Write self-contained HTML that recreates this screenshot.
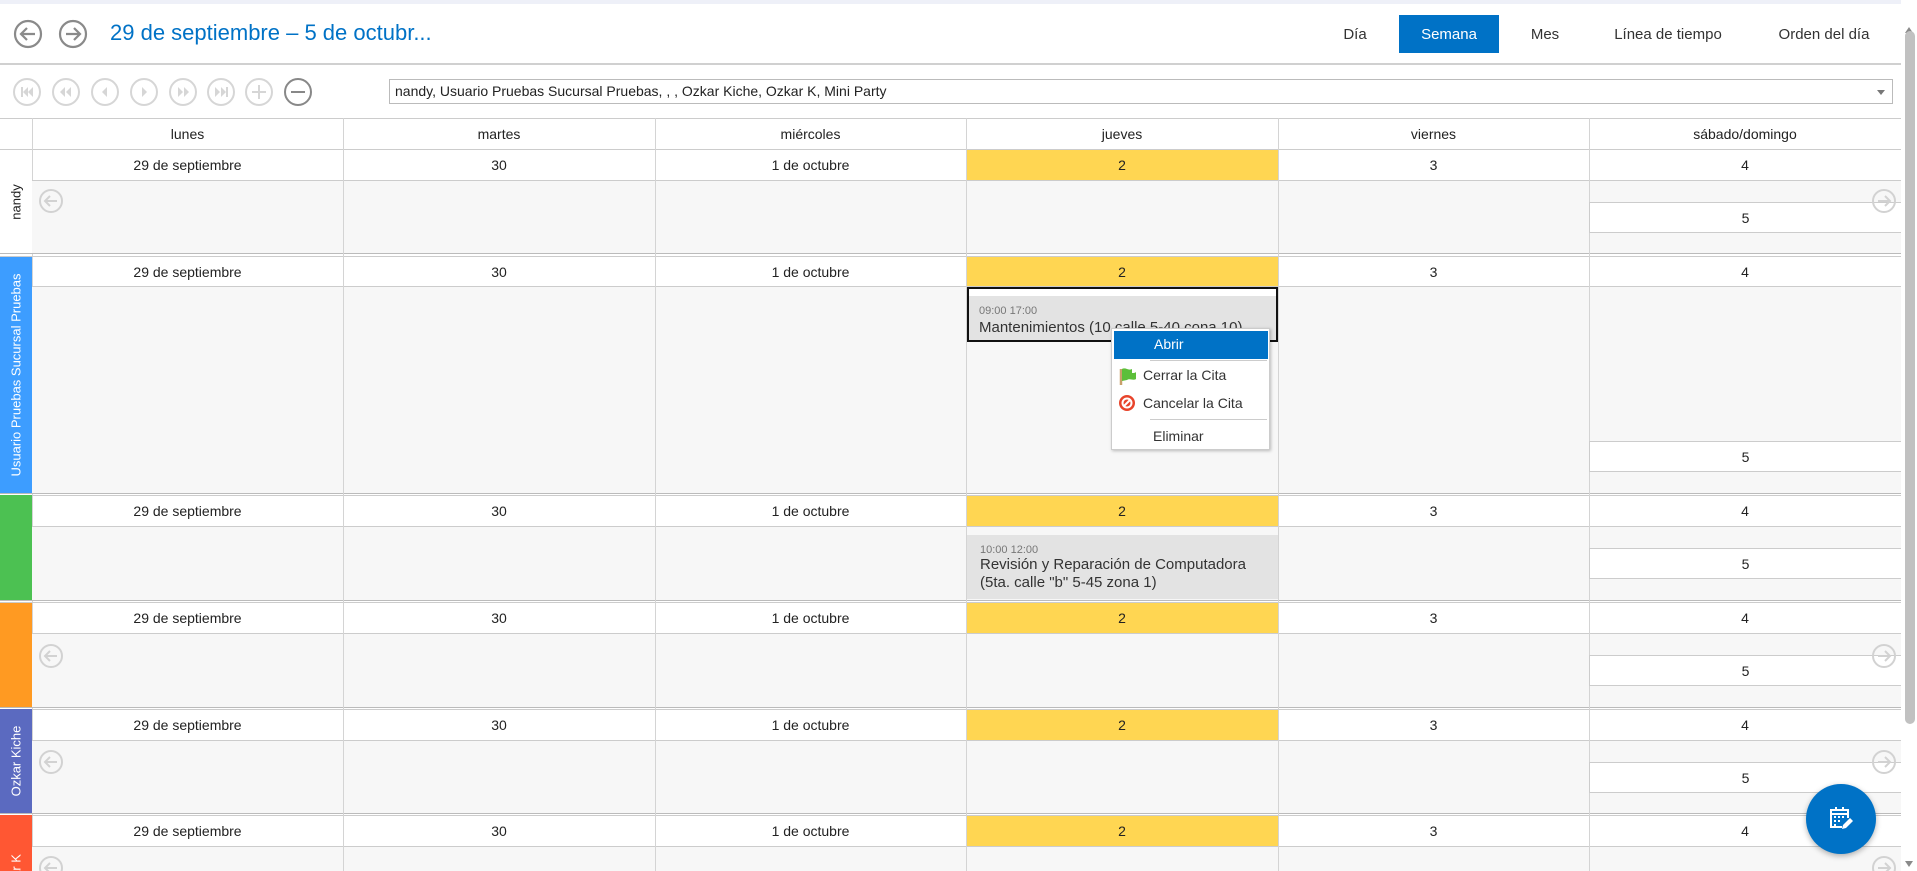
<!DOCTYPE html>
<html><head><meta charset="utf-8"><style>
*{box-sizing:border-box;margin:0;padding:0}
body{width:1917px;height:871px;overflow:hidden;background:#fff;font-family:"Liberation Sans",sans-serif;color:#222;position:relative}
.a{position:absolute}
.c{display:flex;align-items:center;justify-content:center;font-size:14px}
.hl{position:absolute;left:0;width:1901px;height:1px;background:#ccc}
.vl{position:absolute;width:1px;background:#d4d4d4}
.lbl{position:absolute;left:0;width:32px;overflow:hidden;color:#fff;font-size:13px}
.lbl span{position:absolute;left:50%;top:50%;transform:translate(-50%,-50%) rotate(-90deg);white-space:nowrap}
.box5{position:absolute;left:1589px;width:312px;height:31px;background:#fff;border:1px solid #ccc;border-right:none}
.tab{position:absolute;top:15px;height:38px;font-size:15px;display:flex;align-items:center;justify-content:center;color:#333}
</style></head><body>
<div class="a" style="left:0;top:0;width:1917px;height:4px;background:#eef0f8"></div>
<svg class="a" style="left:12px;top:19px" width="80" height="32" viewBox="0 0 80 32" fill="none" stroke="#8a8a8a" stroke-width="2.2">
<circle cx="16" cy="15" r="13"/><path d="M23 15H9M15 9l-6 6 6 6"/>
<circle cx="61" cy="15" r="13"/><path d="M54 15h14M62 9l6 6-6 6"/></svg>
<div class="a" style="left:110px;top:20px;font-size:22px;color:#0072c6">29 de septiembre – 5 de octubr...</div>
<div class="tab" style="left:1325px;width:60px">Día</div>
<div class="tab" style="left:1399px;width:100px;background:#0072c6;color:#fff">Semana</div>
<div class="tab" style="left:1520px;width:50px">Mes</div>
<div class="tab" style="left:1603px;width:130px">Línea de tiempo</div>
<div class="tab" style="left:1764px;width:120px">Orden del día</div>
<div class="a" style="left:0;top:63px;width:1901px;height:2px;background:#d0d0d0"></div>
<svg class="a" style="left:10px;top:77px" width="305" height="32" fill="none" stroke-width="2">
<g stroke="#d6d6d6"><circle cx="17" cy="15" r="13"/><circle cx="56" cy="15" r="13"/><circle cx="95" cy="15" r="13"/><circle cx="134" cy="15" r="13"/><circle cx="173" cy="15" r="13"/><circle cx="211" cy="15" r="13"/><circle cx="249" cy="15" r="13"/>
<path d="M249 8v14M242 15h14"/></g>
<g fill="#d6d6d6" stroke="none"><rect x="11" y="10" width="2" height="10"/><path d="M18 10l-5 5 5 5zM23 10l-5 5 5 5z"/>
<path d="M55 10l-5 5 5 5zM61 10l-5 5 5 5z"/><path d="M97 10l-5 5 5 5z"/><path d="M132 10l5 5-5 5z"/>
<path d="M168 10l5 5-5 5zM174 10l5 5-5 5z"/><path d="M205 10l5 5-5 5zM211 10l5 5-5 5z"/><rect x="216" y="10" width="2" height="10"/></g>
<g stroke="#888"><circle cx="288" cy="15" r="13"/><path d="M281 15h14"/></g></svg>
<div class="a" style="left:389px;top:79px;width:1504px;height:25px;border:1px solid #bbb;font-size:14px;padding:3px 5px;color:#222">nandy, Usuario Pruebas Sucursal Pruebas, , , Ozkar Kiche, Ozkar K, Mini Party</div>
<div class="a" style="left:1877px;top:90px;border:4px solid transparent;border-top:5px solid #777;border-bottom:none"></div>
<div class="hl" style="top:118px"></div>
<div class="a c" style="left:32px;top:119px;width:311px;height:30px">lunes</div>
<div class="a c" style="left:343px;top:119px;width:312px;height:30px">martes</div>
<div class="a c" style="left:655px;top:119px;width:311px;height:30px">miércoles</div>
<div class="a c" style="left:966px;top:119px;width:312px;height:30px">jueves</div>
<div class="a c" style="left:1278px;top:119px;width:311px;height:30px">viernes</div>
<div class="a c" style="left:1589px;top:119px;width:312px;height:30px">sábado/domingo</div>
<div class="hl" style="top:149px"></div>
<div class="vl" style="left:32px;top:118px;height:753px"></div>
<div class="a" style="left:32px;top:180px;width:1869px;height:73px;background:#f7f7f7"></div>
<div class="a" style="left:32px;top:286px;width:1869px;height:207px;background:#f7f7f7"></div>
<div class="a" style="left:32px;top:526px;width:1869px;height:74px;background:#f7f7f7"></div>
<div class="a" style="left:32px;top:633px;width:1869px;height:74px;background:#f7f7f7"></div>
<div class="a" style="left:32px;top:740px;width:1869px;height:73px;background:#f7f7f7"></div>
<div class="a" style="left:32px;top:846px;width:1869px;height:25px;background:#f7f7f7"></div>
<div class="a" style="left:966px;top:150px;width:312px;height:30px;background:#ffd652"></div>
<div class="a" style="left:966px;top:257px;width:312px;height:29px;background:#ffd652"></div>
<div class="a" style="left:966px;top:495px;width:312px;height:31px;background:#ffd652"></div>
<div class="a" style="left:966px;top:603px;width:312px;height:30px;background:#ffd652"></div>
<div class="a" style="left:966px;top:709px;width:312px;height:31px;background:#ffd652"></div>
<div class="a" style="left:966px;top:815px;width:312px;height:31px;background:#ffd652"></div>
<div class="hl" style="top:180px"></div>
<div class="hl" style="top:253px;background:#bbb"></div><div class="hl" style="top:256px"></div>
<div class="hl" style="top:286px"></div>
<div class="hl" style="top:493px;background:#bbb"></div><div class="hl" style="top:495px"></div>
<div class="hl" style="top:526px"></div>
<div class="hl" style="top:600px;background:#bbb"></div><div class="hl" style="top:602px"></div>
<div class="hl" style="top:633px"></div>
<div class="hl" style="top:707px;background:#bbb"></div><div class="hl" style="top:709px"></div>
<div class="hl" style="top:740px"></div>
<div class="hl" style="top:813px;background:#bbb"></div><div class="hl" style="top:815px"></div>
<div class="hl" style="top:846px"></div>
<div class="vl" style="left:343px;top:118px;height:753px"></div>
<div class="vl" style="left:655px;top:118px;height:753px"></div>
<div class="vl" style="left:966px;top:118px;height:753px"></div>
<div class="vl" style="left:1278px;top:118px;height:753px"></div>
<div class="vl" style="left:1589px;top:118px;height:753px"></div>
<div class="a c" style="left:32px;top:150px;width:311px;height:30px">29 de septiembre</div><div class="a c" style="left:343px;top:150px;width:312px;height:30px">30</div><div class="a c" style="left:655px;top:150px;width:311px;height:30px">1 de octubre</div><div class="a c" style="left:966px;top:150px;width:312px;height:30px">2</div><div class="a c" style="left:1278px;top:150px;width:311px;height:30px">3</div><div class="a c" style="left:1589px;top:150px;width:312px;height:30px">4</div>
<div class="a c" style="left:32px;top:257px;width:311px;height:29px">29 de septiembre</div><div class="a c" style="left:343px;top:257px;width:312px;height:29px">30</div><div class="a c" style="left:655px;top:257px;width:311px;height:29px">1 de octubre</div><div class="a c" style="left:966px;top:257px;width:312px;height:29px">2</div><div class="a c" style="left:1278px;top:257px;width:311px;height:29px">3</div><div class="a c" style="left:1589px;top:257px;width:312px;height:29px">4</div>
<div class="a c" style="left:32px;top:495px;width:311px;height:31px">29 de septiembre</div><div class="a c" style="left:343px;top:495px;width:312px;height:31px">30</div><div class="a c" style="left:655px;top:495px;width:311px;height:31px">1 de octubre</div><div class="a c" style="left:966px;top:495px;width:312px;height:31px">2</div><div class="a c" style="left:1278px;top:495px;width:311px;height:31px">3</div><div class="a c" style="left:1589px;top:495px;width:312px;height:31px">4</div>
<div class="a c" style="left:32px;top:603px;width:311px;height:30px">29 de septiembre</div><div class="a c" style="left:343px;top:603px;width:312px;height:30px">30</div><div class="a c" style="left:655px;top:603px;width:311px;height:30px">1 de octubre</div><div class="a c" style="left:966px;top:603px;width:312px;height:30px">2</div><div class="a c" style="left:1278px;top:603px;width:311px;height:30px">3</div><div class="a c" style="left:1589px;top:603px;width:312px;height:30px">4</div>
<div class="a c" style="left:32px;top:709px;width:311px;height:31px">29 de septiembre</div><div class="a c" style="left:343px;top:709px;width:312px;height:31px">30</div><div class="a c" style="left:655px;top:709px;width:311px;height:31px">1 de octubre</div><div class="a c" style="left:966px;top:709px;width:312px;height:31px">2</div><div class="a c" style="left:1278px;top:709px;width:311px;height:31px">3</div><div class="a c" style="left:1589px;top:709px;width:312px;height:31px">4</div>
<div class="a c" style="left:32px;top:815px;width:311px;height:31px">29 de septiembre</div><div class="a c" style="left:343px;top:815px;width:312px;height:31px">30</div><div class="a c" style="left:655px;top:815px;width:311px;height:31px">1 de octubre</div><div class="a c" style="left:966px;top:815px;width:312px;height:31px">2</div><div class="a c" style="left:1278px;top:815px;width:311px;height:31px">3</div><div class="a c" style="left:1589px;top:815px;width:312px;height:31px">4</div>
<div class="box5 c" style="top:202px">5</div>
<div class="box5 c" style="top:441px">5</div>
<div class="box5 c" style="top:548px">5</div>
<div class="box5 c" style="top:655px">5</div>
<div class="box5 c" style="top:762px">5</div>
<div class="lbl" style="top:150px;height:103px;background:#fff;color:#222"><span>nandy</span></div>
<div class="lbl" style="top:257px;height:236px;background:#3d9dff"><span>Usuario Pruebas Sucursal Pruebas</span></div>
<div class="lbl" style="top:495px;height:105px;background:#4cc152"></div>
<div class="lbl" style="top:603px;height:104px;background:#ff9a22"></div>
<div class="lbl" style="top:709px;height:104px;background:#5b6ac0"><span>Ozkar Kiche</span></div>
<div class="lbl" style="top:815px;height:56px;background:#ff5733"><span style="top:auto;bottom:-14px;transform:translateX(-50%) rotate(-90deg)">Ozkar K</span></div>
<svg class="a" style="left:0;top:0" width="1917" height="871" fill="none" stroke="#d2d2d2" stroke-width="2">
<g id="la"><circle cx="51" cy="201" r="11"/><path d="M57 201H45M50 196l-5 5 5 5"/></g>
<use href="#la" y="455"/><use href="#la" y="561"/><use href="#la" y="667"/>
<g id="ra"><circle cx="1884" cy="201" r="11"/><path d="M1878 201h12M1885 196l5 5-5 5"/></g>
<use href="#ra" y="455"/><use href="#ra" y="561"/><use href="#ra" y="667"/>
</svg>
<div class="a" style="left:967px;top:287px;width:311px;height:55px;border:2px solid #111;background:#fff">
<div style="position:absolute;left:0;right:0;top:7px;bottom:0;background:#e3e3e3;padding:9px 10px 0;overflow:hidden">
<div style="font-size:11px;color:#777">09:00 17:00</div>
<div style="font-size:15px;color:#333;white-space:nowrap;margin-top:2px">Mantenimientos (10 calle 5-40 cona 10)</div></div></div>
<div class="a" style="left:967px;top:535px;width:311px;height:64px;background:#e3e3e3;padding:9px 13px">
<div style="font-size:11px;color:#777">10:00 12:00</div>
<div style="font-size:15px;color:#333;line-height:18px">Revisión y Reparación de Computadora<br>(5ta. calle "b" 5-45 zona 1)</div></div>
<div class="a" style="left:1111px;top:328px;width:159px;height:122px;background:#fff;border:1px solid #ccc;box-shadow:1px 1px 3px rgba(0,0,0,.25);font-size:14px;color:#333">
<div class="a" style="left:2px;top:2px;width:154px;height:28px;background:#0072c6;color:#fff;padding:5px 0 0 40px">Abrir</div>
<div class="a" style="left:38px;top:31px;width:117px;height:1px;background:#ccc"></div>
<svg class="a" style="left:6px;top:37px" width="20" height="20"><path d="M3 3v16" stroke="#c8a06a" stroke-width="2.5"/><path d="M4 3c4-2 6 2 10 0v4c2 0 3 0 4-1v7c-3 2-6-1-9 1l-5 1z" fill="#5cbf3a"/></svg>
<div class="a" style="left:31px;top:38px">Cerrar la Cita</div>
<svg class="a" style="left:6px;top:65px" width="18" height="18"><circle cx="9" cy="9" r="8" fill="#e8442b"/><circle cx="9" cy="9" r="4.5" fill="none" stroke="#fff" stroke-width="2"/><path d="M5.5 12.5l7-7" stroke="#fff" stroke-width="2"/></svg>
<div class="a" style="left:31px;top:66px">Cancelar la Cita</div>
<div class="a" style="left:38px;top:90px;width:117px;height:1px;background:#ccc"></div>
<div class="a" style="left:41px;top:99px">Eliminar</div>
</div>
<div class="a" style="left:1901px;top:0;width:16px;height:871px;background:#fff"></div>
<div class="a" style="left:1905px;top:27px;border:4px solid transparent;border-bottom:6px solid #8a8a8a;border-top:none"></div>
<div class="a" style="left:1905px;top:31px;width:10px;height:693px;background:#c1c1c1;border-radius:5px"></div>
<div class="a" style="left:1905px;top:861px;border:4px solid transparent;border-top:6px solid #8a8a8a;border-bottom:none"></div>
<div class="a" style="left:1806px;top:784px;width:70px;height:70px;border-radius:50%;background:#0072c6;box-shadow:0 2px 6px rgba(0,0,0,.3)"></div>
<svg class="a" style="left:1826px;top:804px" width="30" height="30" fill="none" stroke="#fff" stroke-width="2"><path d="M16 23H5V6h17v8"/><path d="M5 10h17M10 3v4M17 3v4"/><g fill="#fff" stroke="none"><rect x="8" y="12" width="2" height="2"/><rect x="12" y="12" width="2" height="2"/><rect x="16" y="12" width="2" height="2"/><rect x="8" y="16" width="2" height="2"/><rect x="12" y="16" width="2" height="2"/><rect x="8" y="20" width="2" height="2"/></g><path d="M16 25l1-4 7-7 3 3-7 7z" fill="#fff" stroke="none"/></svg>
</body></html>
